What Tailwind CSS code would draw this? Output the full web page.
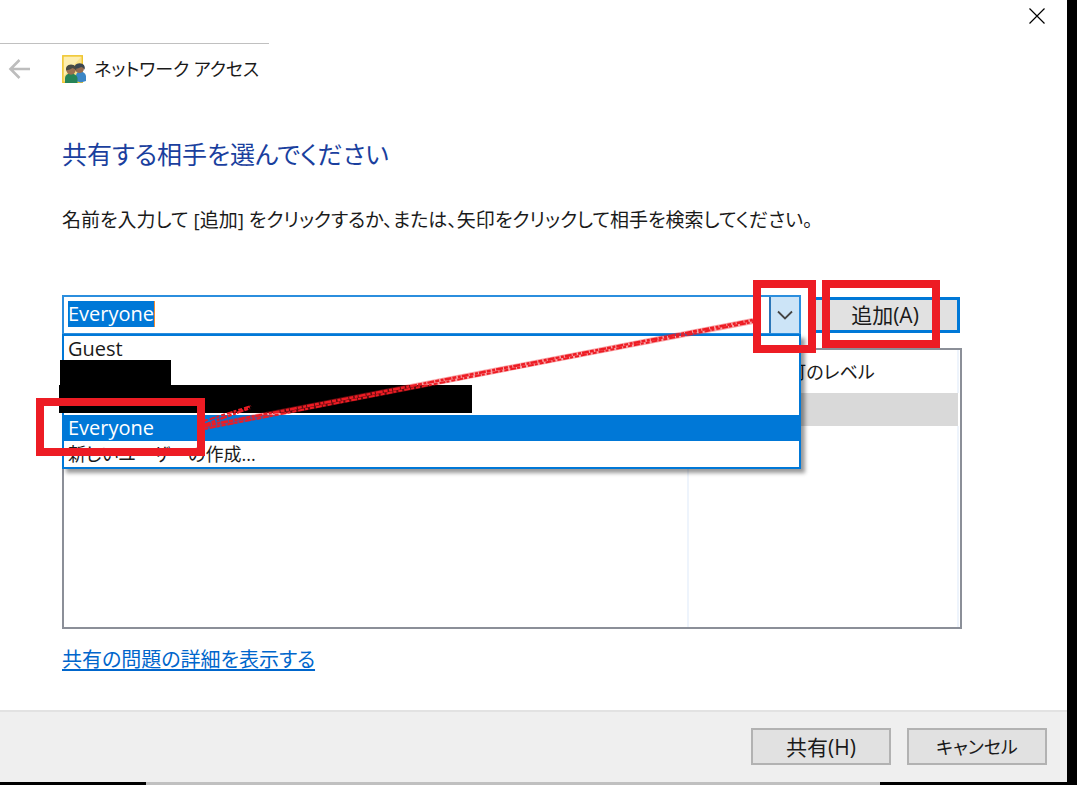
<!DOCTYPE html>
<html lang="ja">
<head>
    <meta charset="UTF-8">
    <meta name="viewport" content="width=device-width, initial-scale=1.0">
    <title>ネットワーク アクセス</title>
    <script src="https://cdn.jsdelivr.net/npm/@tailwindcss/browser@4"></script>
</head>
<body class="relative flex min-h-screen flex-col overflow-hidden bg-black pr-[10px] font-['Open_Sans','Noto_Sans_CJK_JP',sans-serif] text-[20px] leading-[26px] text-[#1a1a1a] [font-feature-settings:'palt']">

    <!-- Dialog window -->
    <div class="flex grow flex-col bg-white">
        <!-- Title bar -->
        <div class="flex h-[43px] items-start justify-end pr-5">
            <button type="button" aria-label="閉じる" class="flex h-8 w-5 items-center justify-center">
                <svg class="h-4 w-4" viewBox="0 0 16 16" fill="none" stroke="#000" stroke-width="1.2">
                    <path d="M.5 .5l15 15M15.500 .5l-15 15" />
                </svg>
            </button>
        </div>
        <div class="h-px w-[269px] bg-[#c0c0c0]"></div>

        <!-- Header -->
        <header class="flex h-[49px] items-center pl-2">
            <button type="button" aria-label="戻る" class="mr-8">
                <svg class="h-6 w-[22px]" viewBox="0 0 22 24" fill="none" stroke="#bdbdbd" stroke-width="2.6">
                    <path d="M22 12H2.500M11.500 3L2.500 12l9 9" />
                </svg>
            </button>
            <svg class="mr-2 h-[30px] w-6" viewBox="0 0 24 30">
                <rect x=".8" y="1.800" width="19.500" height="26.500" fill="#fbe28a" stroke="#efc52e" stroke-width="1.400" />
                <path d="M2 3l17 0L2 22z" fill="#fdeeb0" />
                <path d="M14 27v-6q1-3.500 4-3.500 5 0 6 4.500v5l-5 1.500z" fill="#3b86c6" />
                <circle cx="17.500" cy="14.500" r="4.500" fill="#966c50" />
                <path d="M12.800 15q-1-5.500 4.700-5.700 6.300.2 5.200 6.500-1.500-2.500-3.500-2.800-2.500 1.500-6.400 2z" fill="#3a4650" />
                <path d="M3 29v-5q.5-4.500 5.500-4.500 6 0 7 4.500V29z" fill="#278457" />
                <circle cx="9" cy="16" r="4.700" fill="#9a7050" />
                <path d="M4 16.500q-.8-5.700 5-6 6.200.3 5.200 6.300-1.200-2.600-3.700-2.900-2 1.600-6.500 2.600z" fill="#474a44" />
            </svg>
            <h1 class="text-[18px]">ネットワーク アクセス</h1>
        </header>

        <main class="flex grow flex-col pr-[105px] pl-[62px]">
            <h2 class="mt-[42px] text-[25px] leading-[38px] text-[#1a3f9e]">共有する相手を選んでください</h2>
            <p class="mt-[34px] text-[19px]">名前を入力して [追加] をクリックするか、または、矢印をクリックして相手を検索してください。</p>

            <div class="mt-[62px] flex items-center gap-[9px] pr-0.5">
                <!-- Editable combo box -->
                <div class="relative h-10 grow border-2 border-[#2b8ede] bg-white">
                    <div class="flex h-full">
                        <div class="flex grow items-start pt-1 pl-1">
                            <input type="text" value="Everyone" aria-label="名前" role="combobox" aria-expanded="true" aria-controls="people" class="field-sizing-content h-[26px] border-r border-[#f08a30] bg-[#0078d7] leading-[26px] text-white">
                        </div>
                        <button type="button" aria-label="一覧を開く" class="flex w-[30px] items-center justify-center border-l-2 border-[#2b76b8] bg-[#cce4f7]">
                            <svg class="h-4 w-4" viewBox="0 0 16 16" fill="none" stroke="#444" stroke-width="1.800">
                                <path d="M1 4.500l7 7 7-7" />
                            </svg>
                        </button>
                    </div>
                    <ul id="people" role="listbox" class="absolute top-[37px] -right-[2px] -left-[2px] z-10 border-2 border-[#0078d7] bg-white shadow-[4px_4px_4px_rgba(0,0,0,0.4)]">
                        <li role="option" class="h-[27px] px-1">Guest</li>
                        <li role="option" class="h-[26px] px-1"></li>
                        <li role="option" class="h-[26px] px-1"></li>
                        <li role="option" aria-selected="true" class="h-[26px] bg-[#0078d7] px-1 text-white">Everyone</li>
                        <li role="option" class="h-[26px] px-1 text-[18px]">新しいユーザーの作成...</li>
                    </ul>
                </div>
                <button type="button" class="h-9 w-[150px] border-[3px] border-[#0078d7] bg-[#e1e1e1] text-[21px]">追加(A)</button>
            </div>

            <!-- Permission list -->
            <div class="mt-[13px] h-[281px] border-2 border-[#8b8f98] px-px">
                <table class="h-full w-full table-fixed border-collapse text-left">
                    <thead>
                        <tr class="h-[43px]">
                            <th scope="col" class="border-r-2 border-[#eef4fc] font-normal"></th>
                            <th scope="col" class="w-[270px] border-r-2 border-[#eef4fc] pl-4 text-[18px] font-normal">アクセス許可のレベル</th>
                        </tr>
                    </thead>
                    <tbody>
                        <tr class="h-[33px] bg-[#d9d9d9]"><td></td><td></td></tr>
                        <tr><td class="border-r-2 border-[#eef4fc]"></td><td class="border-r-2 border-[#eef4fc]"></td></tr>
                    </tbody>
                </table>
            </div>

            <a href="#" class="mt-[18px] self-start text-[#0066cc] underline underline-offset-2">共有の問題の詳細を表示する</a>
        </main>

        <footer class="flex h-[72px] items-start justify-end gap-4 border-t-2 border-[#e2e2e2] bg-[#efefef] pt-4 pr-5">
            <button type="button" class="h-[37px] w-[140px] border-2 border-[#b2b2b2] bg-[#e1e1e1] text-[21px]">共有(H)</button>
            <button type="button" class="h-[37px] w-[140px] border-2 border-[#b2b2b2] bg-[#e1e1e1] text-[18px]">キャンセル</button>
        </footer>
    </div>
    <div class="mr-[187px] ml-[146px] h-[3px] bg-[#c0c0c0]"></div>

    <!-- Redactions and red markers drawn over the dialog -->
    <svg class="pointer-events-none absolute top-0 left-0 z-20 h-[785px] w-[1077px]" viewBox="0 0 1077 785" fill="none">
        <path d="M60 360h111v25h301v28H59v-28h1z" fill="#000" />
        <g stroke="#ed1c24">
            <path d="M204 427L753 321" stroke-width="6" stroke-opacity=".4" />
            <path d="M204 426L753 320M204 425L250 408" stroke-width="2.500" stroke-dasharray="7 1 4 1.500 3 1" />
            <path d="M204 429L753 322M204 421L251 406" stroke-width="2" stroke-dasharray="4 2 6 1 3 2" />
            <g stroke-width="8">
                <rect x="757" y="284" width="55" height="65" />
                <rect x="826" y="284" width="110" height="60" />
                <rect x="40" y="402" width="161" height="50" />
            </g>
        </g>
    </svg>

</body>
</html>
